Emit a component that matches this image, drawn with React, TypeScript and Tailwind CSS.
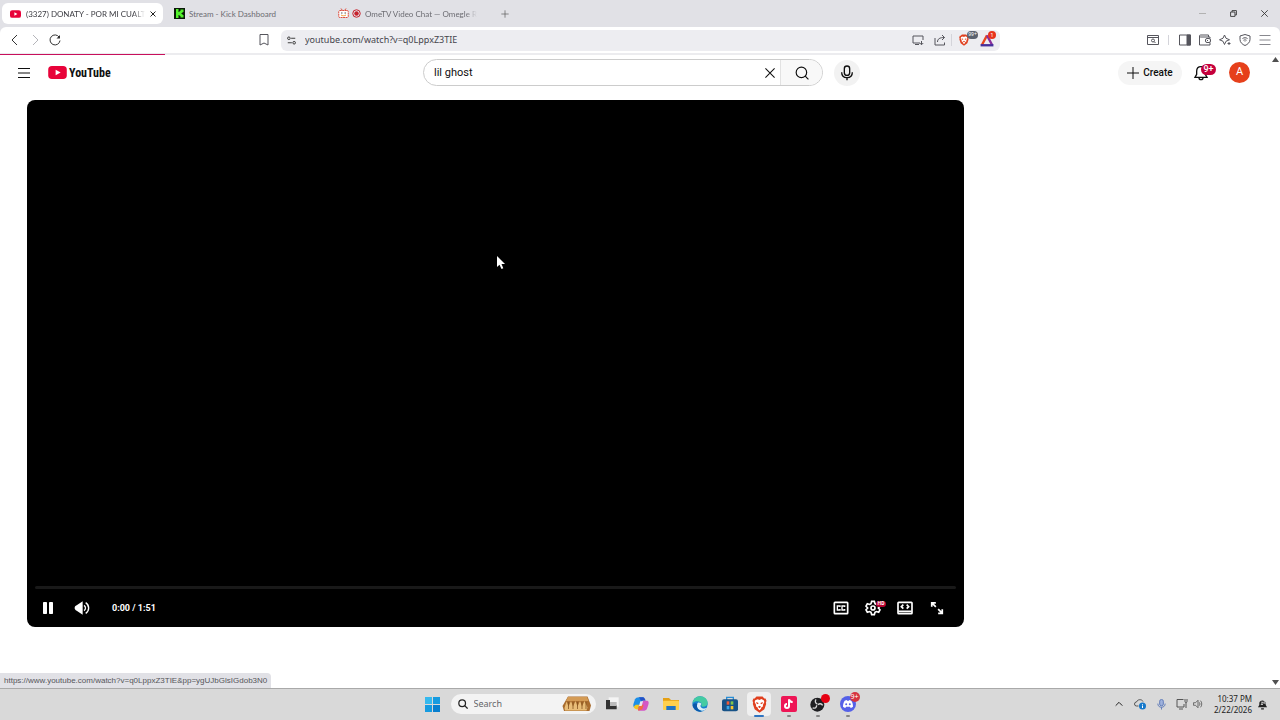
import { useState, ReactNode } from "react";

interface GlyphProps {
  className?: string;
  box?: string;
  weight?: number;
  children: ReactNode;
}

function Glyph({ className = "h-4 w-4", box = "0 0 24 24", weight = 2, children }: GlyphProps) {
  return (
    <svg
      className={`shrink-0 ${className}`}
      viewBox={box}
      fill="none"
      stroke="currentColor"
      strokeWidth={weight}
      aria-hidden="true"
    >
      {children}
    </svg>
  );
}

function YouTubeMark({ className }: { className: string }) {
  return (
    <svg className={`shrink-0 ${className}`} viewBox="0 0 20 14" aria-hidden="true">
      <rect width="20" height="14" rx="4" fill="#e8033a" />
      <path d="M8 4l5.4 3L8 10z" fill="#fff" />
    </svg>
  );
}

function BraveLion({ className }: { className: string }) {
  return (
    <svg className={`shrink-0 ${className}`} viewBox="0 0 24 28" aria-hidden="true">
      <path
        d="M7 1h10l3 3 2 0 1.500 4-1 3 .5 2-3 9-8 5.500-8-5.500-3-9 .5-2-1-3L2 4h2z"
        fill="#e0401f"
      />
      <path
        d="M5 7l4-1.500 3 1 3-1.500L19 7l1 3-2.500 5 .5 2-3 2-.5 2L12 23.500 9.500 21 9 19l-3-2 .5-2L4 10z"
        fill="#fff"
      />
      <path d="M6.500 10l4 1.500-1 2-2.500-1zM17.500 10l-4 1.500 1 2 2.500-1zM9.500 17.500L12 16l2.500 1.500L12 20z" fill="#e0401f" />
    </svg>
  );
}

function IconButton({
  label,
  className = "w-5",
  children,
}: {
  label: string;
  className?: string;
  children: ReactNode;
}) {
  return (
    <button type="button" aria-label={label} className={`flex h-5 shrink-0 items-center justify-center ${className}`}>
      {children}
    </button>
  );
}

function TabStrip() {
  return (
    <div className="flex h-[27px] items-center bg-[#e1e1e6] pl-0.5 font-[Lato,sans-serif] text-[8px] text-[#6c6c72]">
      <div className="mr-1 flex h-[21px] w-[161px] items-center rounded-md bg-white pr-1 pl-2 text-[#3c3c42]">
        <YouTubeMark className="h-2 w-[11px]" />
        <span className="ml-[5px] mask-r-from-90% whitespace-nowrap">(3327) DONATY - POR MI CUALT</span>
        <IconButton label="Close tab" className="ml-auto w-3 text-[#222]">
          <Glyph className="h-1.5 w-1.5" weight={4}>
            <path d="M2 2l20 20M22 2L2 22" />
          </Glyph>
        </IconButton>
      </div>
      <div className="mr-0.5 flex h-[21px] w-[161px] items-center gap-1 pl-[7px]">
        <svg className="h-[11px] w-[11px] shrink-0" viewBox="0 0 11 11" aria-hidden="true">
          <rect width="11" height="11" fill="#0a1a08" />
          <path d="M2 1h2.500v3h1V3h1V1.500H9.500V4h-1v1h-1v1h1v1h1v2.500H6.500V8h-1V7h-1v3H2z" fill="#53f22c" />
        </svg>
        <span>Stream - Kick Dashboard</span>
      </div>
      <div className="flex h-[21px] w-[161px] items-center pl-2">
        <svg className="h-[11px] w-[11px] shrink-0" viewBox="0 0 22 22" fill="none" stroke="#dd4c3c" strokeWidth="2" aria-hidden="true">
          <path d="M6 1l3 4M16 1l-3 4" />
          <rect x="1.500" y="5" width="19" height="14" rx="2" fill="#fff" strokeDasharray="4 1" />
          <path d="M6 10h3M13 10h3" stroke="#555" />
          <path d="M6 14c3 2 7 2 10 0" stroke="#ef9d38" />
        </svg>
        <svg className="ml-[3px] h-[9px] w-[9px] shrink-0" viewBox="0 0 18 18" aria-hidden="true">
          <circle cx="9" cy="9" r="7.500" fill="none" stroke="#c6222d" strokeWidth="2" />
          <circle cx="9" cy="9" r="4.500" fill="#c6222d" />
        </svg>
        <span className="ml-1 mask-r-from-90% whitespace-nowrap">OmeTV Video Chat — Omegle R</span>
      </div>
      <IconButton label="New tab" className="ml-1 w-5 text-[#555]">
        <Glyph className="h-2 w-2">
          <path d="M12 1v22M1 12h22" />
        </Glyph>
      </IconButton>
      <div className="ml-auto flex text-[#333]">
        <IconButton label="Minimize" className="w-[31px]">
          <Glyph className="h-[7px] w-[7px] text-[#aaa]" weight={3}>
            <path d="M0 12h24" />
          </Glyph>
        </IconButton>
        <IconButton label="Restore" className="w-[31px]">
          <Glyph className="h-[7px] w-[7px]" weight={3}>
            <path d="M2 7h15v15H2zM7 7V2h15v15h-5" />
          </Glyph>
        </IconButton>
        <IconButton label="Close window" className="w-[31px]">
          <Glyph className="h-[7px] w-[7px]" weight={3}>
            <path d="M1 1l22 22M23 1L1 23" />
          </Glyph>
        </IconButton>
      </div>
    </div>
  );
}

function Toolbar() {
  const [url, setUrl] = useState("youtube.com/watch?v=q0LppxZ3TIE");

  return (
    <div className="bg-[#e1e1e6]">
      <div className="flex h-[26px] items-center rounded-t-md bg-white px-[5px] text-[#55555c]">
        <IconButton label="Back">
          <Glyph className="h-3 w-3 text-[#333]">
            <path d="M16 2L6 12l10 10" />
          </Glyph>
        </IconButton>
        <IconButton label="Forward">
          <Glyph className="h-3 w-3 text-[#b5b5ba]">
            <path d="M8 2l10 10L8 22" />
          </Glyph>
        </IconButton>
        <IconButton label="Reload">
          <Glyph className="h-3 w-3 text-[#333]">
            <path d="M20.500 6.500A10 10 0 1 0 22 13" />
            <path d="M22 2v7h-7z" fill="currentColor" stroke="none" />
          </Glyph>
        </IconButton>
        <IconButton label="Bookmark" className="ml-[189px] w-5">
          <Glyph className="h-3 w-3">
            <path d="M4 1h16v21l-8-4-8 4z" />
          </Glyph>
        </IconButton>
        <div className="ml-[7px] flex h-[21px] flex-1 items-center rounded-md bg-[#ededf1]">
          <IconButton label="Site settings">
            <Glyph className="h-[9px] w-[9px] text-[#333]" weight={2.5}>
              <circle cx="5" cy="6" r="3.500" />
              <path d="M11 6h11M2 18h11" />
              <circle cx="19" cy="18" r="3.500" />
            </Glyph>
          </IconButton>
          <input
            aria-label="Address"
            value={url}
            onChange={(e) => setUrl(e.target.value)}
            className="ml-1 min-w-0 flex-1 text-[9px] text-[#45454c] focus:outline-none"
          />
          <IconButton label="Install app" className="w-[22px]">
            <Glyph className="h-3 w-3">
              <path d="M22 12V4H2v14h14M6 21h8M19 14v7M15.500 18l3.500 3.500 3.500-3.500" />
            </Glyph>
          </IconButton>
          <IconButton label="Share" className="w-[22px]">
            <Glyph className="h-3 w-3">
              <path d="M2 8v14h19v-5M7 16c0-6 4-9 14-9M16 2l5 5-5 5" />
            </Glyph>
          </IconButton>
          <span className="h-3 w-px bg-[#d4d4da]" />
          <button type="button" aria-label="Brave Shields" className="relative ml-1 flex h-5 w-6 items-center pl-[3px]">
            <BraveLion className="h-3 w-[10px]" />
            <span className="absolute top-px left-[11px] flex h-2 w-[11px] items-center justify-center rounded bg-[#5b626f] text-[5px] text-white">
              99+
            </span>
          </button>
          <button type="button" aria-label="Brave Rewards" className="relative flex h-5 w-5 items-center">
            <svg className="h-3.5 w-3.5" viewBox="0 0 24 24" strokeWidth="4" fill="none" aria-hidden="true">
              <path d="M12 4L3 21" stroke="#e8461f" />
              <path d="M12 4l9 17" stroke="#8a2e9a" />
              <path d="M1 21h22" stroke="#46309b" />
            </svg>
            <span className="absolute top-px left-2 flex h-2 w-2 items-center justify-center rounded-full bg-[#e8331c] text-[6px] text-white">
              1
            </span>
          </button>
        </div>
        <IconButton label="Search tabs" className="ml-[143px] w-5">
          <Glyph className="h-3 w-3">
            <path d="M1 3h22v18H1zM1 7h22" />
            <circle cx="12" cy="13" r="3" />
            <path d="M14 15l3 3" />
          </Glyph>
        </IconButton>
        <span className="mr-[6px] ml-[5px] h-2.5 w-px bg-[#d4d4da]" />
        <IconButton label="Sidebar">
          <Glyph className="h-3 w-3">
            <path d="M1 2h22v20H1z" />
            <path d="M16 2h7v20h-7z" fill="currentColor" />
          </Glyph>
        </IconButton>
        <IconButton label="Wallet">
          <Glyph className="h-3 w-3">
            <path d="M22 9V6H3a2 2 0 0 1 0-4h16v4M1 4v18h21v-5" />
            <rect x="13" y="9" width="10" height="8" rx="3" />
            <path d="M16 13h2" />
          </Glyph>
        </IconButton>
        <IconButton label="Leo AI">
          <Glyph className="h-3 w-3">
            <path d="M11 2l3 6.500 7 3-7 3-3 6.500-3-6.500-7-3 7-3z" />
            <path d="M20 16v6M17 19h6" />
          </Glyph>
        </IconButton>
        <IconButton label="VPN">
          <Glyph className="h-3 w-3">
            <path d="M12 1l10 3v7c0 6-5 10-10 12C7 21 2 17 2 11V4z" />
            <path d="M7 9c3-2 7-2 10 0M9 12.500c2-1 4-1 6 0M12 15v1" />
          </Glyph>
        </IconButton>
        <IconButton label="Menu">
          <Glyph className="h-3 w-3 text-[#88888e]">
            <path d="M1 3h22M1 12h22M1 21h22" />
          </Glyph>
        </IconButton>
      </div>
      <div className="h-0.5 bg-[#ececef] pt-px">
        <div className="h-px w-[165px] bg-[#c8105c]" />
      </div>
    </div>
  );
}

function Masthead() {
  const [query, setQuery] = useState("lil ghost");

  return (
    <header className="grid h-[35px] grid-cols-[1fr_auto_1fr] items-center pr-1 pl-[17px] font-[Roboto,sans-serif] text-[#0f0f0f]">
      <div className="flex items-center">
        <IconButton label="Guide" className="w-3.5">
          <Glyph className="h-3 w-3">
            <path d="M0 3h24M0 12h24M0 21h24" />
          </Glyph>
        </IconButton>
        <a href="#home" aria-label="YouTube Home" className="ml-[17px] flex items-center">
          <YouTubeMark className="h-[13px] w-[19px]" />
          <span className="ml-0.5 font-['Roboto_Condensed','Open_Sans_Condensed',Roboto,sans-serif] text-xs font-bold">
            YouTube
          </span>
        </a>
      </div>
      <form className="flex items-center" onSubmit={(e) => e.preventDefault()}>
        <div className="flex h-[27px] w-[400px] overflow-hidden rounded-full border border-[#ccc]">
          <input
            aria-label="Search"
            value={query}
            onChange={(e) => setQuery(e.target.value)}
            className="min-w-0 flex-1 pt-px pl-2.5 text-[11px] focus:outline-none"
          />
          <button
            type="button"
            aria-label="Clear search"
            onClick={() => setQuery("")}
            className="flex w-5 items-center justify-center"
          >
            <Glyph className="h-[10px] w-[10px]" weight={2.5}>
              <path d="M1 1l22 22M23 1L1 23" />
            </Glyph>
          </button>
          <button
            type="submit"
            aria-label="Submit search"
            className="flex w-[42px] items-center justify-center border-l border-[#e2e2e2] bg-[#f8f8f8]"
          >
            <Glyph className="h-3.5 w-3.5">
              <circle cx="11" cy="11" r="9" />
              <path d="M17.500 17.500l5.500 5.500" />
            </Glyph>
          </button>
        </div>
        <button
          type="button"
          aria-label="Search with your voice"
          className="ml-[11px] flex h-[26px] w-[26px] items-center justify-center rounded-full bg-[#f2f2f2]"
        >
          <Glyph className="h-4 w-4">
            <rect x="8" y="1.500" width="8" height="14" rx="4" />
            <path d="M4 11c0 5 3 8 8 8s8-3 8-8M12 19v4" />
          </Glyph>
        </button>
      </form>
      <div className="mr-4 flex items-center justify-end">
        <button
          type="button"
          className="flex h-6 w-16 items-center justify-center gap-1 rounded-full bg-[#f5f5f5] text-[10px] font-medium"
        >
          <Glyph className="h-3 w-3">
            <path d="M12 0v24M0 12h24" />
          </Glyph>
          Create
        </button>
        <button type="button" aria-label="Notifications" className="relative ml-[11px] flex h-6 w-[25px] items-center">
          <Glyph className="h-4 w-4">
            <path d="M12 2.500c-4 0-6.500 3-6.500 7V14L3 18.500h18L18.500 14V9.500c0-4-2.500-7-6.500-7z" />
            <path d="M9 19c0 4 6 4 6 0" />
          </Glyph>
          <span className="absolute top-[3px] left-2 flex h-[11px] w-[15px] items-center justify-center rounded-full bg-[#c5003c] text-[9px] leading-none font-medium text-white">
            9+
          </span>
        </button>
        <button
          type="button"
          aria-label="Account"
          className="ml-[11px] flex h-[21px] w-[21px] items-center justify-center rounded-full bg-[#e6401b] text-[11px] text-white"
        >
          A
        </button>
      </div>
    </header>
  );
}

function Player() {
  return (
    <section
      aria-label="Video player"
      className="relative flex aspect-[937/527] flex-col justify-end rounded-lg bg-black px-2 font-[Roboto,sans-serif] text-white"
    >
      <svg className="absolute top-[156px] left-[470px] h-[14px] w-[9px]" viewBox="0 0 9 14" aria-hidden="true">
        <path d="M0 0v11l2.500-2.200L4.500 13l1.800-.8L4.500 8H8z" fill="#fff" />
      </svg>
      <div className="h-[3px] rounded-full bg-[#191919]" />
      <div className="flex h-[38px] items-center pr-[3px]">
        <IconButton label="Pause" className="w-[26px]">
          <Glyph className="h-3 w-3">
            <rect x="2" y="0" width="8" height="24" rx="1.500" fill="currentColor" stroke="none" />
            <rect x="14" y="0" width="8" height="24" rx="1.500" fill="currentColor" stroke="none" />
          </Glyph>
        </IconButton>
        <IconButton label="Mute" className="ml-[13px] w-4">
          <Glyph className="h-4 w-4">
            <path d="M1 12c0-2 1-3 3-4l9-6v20l-9-6c-2-1-3-2-3-4z" fill="currentColor" stroke="none" />
            <path d="M15 8c3 2 3 6 0 8M17.500 4c6 4 6 12 0 16" />
          </Glyph>
        </IconButton>
        <span className="ml-[22px] pt-px text-[9px] font-bold">0:00 / 1:51</span>
        <div className="ml-auto flex">
          <IconButton label="Subtitles" className="w-8">
            <Glyph className="h-4 w-4" weight={2}>
              <rect x="2" y="3.500" width="20" height="17" rx="1" strokeWidth="2.500" />
              <path d="M10.500 10.500V9h-4v6h4v-1.500M17.500 10.500V9h-4v6h4v-1.500" />
            </Glyph>
          </IconButton>
          <button type="button" aria-label="Settings" className="relative flex h-5 w-8 items-center justify-center">
            <Glyph className="h-4 w-4" weight={2.5}>
              <path d="M10 2h4l1 3.500 2 1.200L20.500 5.700l2 3.600L20 12l2.500 2.700-2 3.600-3.500-1-2 1.200L14 22h-4l-1-3.500-2-1.200-3.500 1-2-3.600L4 12 1.500 9.300l2-3.600 3.500 1 2-1.200z" />
              <circle cx="12" cy="12" r="3" />
            </Glyph>
            <span className="absolute top-[3px] left-[19px] flex h-[6px] w-[10px] items-center justify-center rounded-sm bg-[#b8002f] text-[5px] font-bold">
              HD
            </span>
          </button>
          <IconButton label="Theater mode" className="w-8">
            <Glyph className="h-4 w-4" weight={2.5}>
              <rect x="1.500" y="3.500" width="21" height="17" rx="1" />
              <path d="M2 17h20M9.500 7l-3 3 3 3M14.500 7l3 3-3 3" />
            </Glyph>
          </IconButton>
          <IconButton label="Full screen" className="w-8">
            <Glyph className="h-[14px] w-[14px]" weight={3}>
              <path d="M3 10V3h7M3 3l7 7M21 14v7h-7M21 21l-7-7" />
            </Glyph>
          </IconButton>
        </div>
      </div>
    </section>
  );
}

const apps = [
  {
    name: "Task view",
    state: "",
    icon: (
      <>
        <rect x="7" y="2" width="15" height="14" fill="#f4f4f4" />
        <path d="M3 6h6v8h10v6H3z" fill="#333" />
        <path d="M9 9h10v6H9z" fill="#bbb" />
      </>
    ),
  },
  {
    name: "Copilot",
    state: "",
    icon: (
      <>
        <path d="M9 2h7l-5 14-3 2H4c-4 0-4-4-3-7l2-6c1-2 3-3 6-3z" fill="#1b8fe8" />
        <path d="M4 13h6l-3 7c-3 0-5-1-6-4z" fill="#f3c623" />
        <path d="M9 2h6c2 0 3 2 4 5h-7z" fill="#2452c6" />
        <path d="M15 7h5c4 0 4 3 3 6l-2 6c-1 2-3 3-6 3H8z" fill="#d457c5" />
        <path d="M7 20l3-7h6l-2 7-6 2z" fill="#f26a45" />
        <path d="M11 8h4l-2 7H9z" fill="#e9e5ee" />
      </>
    ),
  },
  {
    name: "File Explorer",
    state: "",
    icon: (
      <>
        <path d="M0 3h9l3 3h12v6H0z" fill="#e5a014" />
        <rect y="7" width="24" height="14" rx="1" fill="#ffd04d" />
        <path d="M5 15h14v6H5z" fill="#2074c4" />
      </>
    ),
  },
  {
    name: "Edge",
    state: "",
    icon: (
      <>
        <circle cx="12" cy="12" r="11.500" fill="#1680cf" />
        <path d="M1 10C2 4 7 .500 12 .500c7 0 11.500 5 11.500 9.500 0 4-3 6-7 6-3 0-3-2-2-3 0-5-8-7-13-3z" fill="#44cba2" />
        <path d="M9 10c-4 4-1 11 6 12 3 0 5-1 7-4-3 1-8 1-9-2-1-2 1-3 1-4s-3-3-5-2z" fill="#dceef8" />
        <path d="M8 12c-2 5 1 10 7 11-6 2-13-3-14-9 1-3 4-4 7-2z" fill="#0b58a9" />
      </>
    ),
  },
  {
    name: "Microsoft Store",
    state: "",
    icon: (
      <>
        <path d="M7 6V2h10v4" fill="none" stroke="#2a8ed6" strokeWidth="2" />
        <rect y="5" width="24" height="18" rx="3" fill="#175287" />
        <path d="M7 8h4v5H7z" fill="#f05a38" />
        <path d="M13 8h4v5h-4z" fill="#7fc54b" />
        <path d="M7 15h4v5H7z" fill="#38a7e8" />
        <path d="M13 15h4v5h-4z" fill="#fbc42b" />
      </>
    ),
  },
  { name: "Brave", state: "active", icon: null },
  {
    name: "TikTok",
    state: "open",
    icon: (
      <>
        <rect width="24" height="24" rx="3" fill="#ee1656" />
        <path d="M12 5v10a3 3 0 1 1-3-3M12 5c1 3 3 4 5.500 4" fill="none" stroke="#fff" strokeWidth="3" />
      </>
    ),
  },
  {
    name: "OBS Studio",
    state: "open",
    icon: (
      <>
        <circle cx="11" cy="13" r="10.500" fill="#1f1f22" />
        <path d="M11 12c-3-1-4-4-2-7M12 13c2-2 5-2 7 1M10 14c0 3-2 5-6 4" fill="none" stroke="#d8d8d8" strokeWidth="2" />
      </>
    ),
  },
  {
    name: "Discord",
    state: "open",
    icon: (
      <>
        <circle cx="12" cy="12" r="12" fill="#5561e8" />
        <path d="M7 7l3-1 .7 1.300h2.600L14 6l3 1c2 3 2.500 6 2.500 9-1 1-2 1.500-3.500 2l-1-2H9l-1 2c-1.500-.5-2.500-1-3.500-2 0-3 .5-6 2.500-9z" fill="#fff" />
        <circle cx="9.300" cy="12.500" r="1.500" fill="#5561e8" />
        <circle cx="14.700" cy="12.500" r="1.500" fill="#5561e8" />
      </>
    ),
  },
];

function Taskbar() {
  return (
    <footer className="grid h-8 grid-cols-[1fr_auto_1fr] items-center border-t border-[#a9a9a9] bg-[#d9d9d9] pb-px text-[#222]">
      <div />
      <div className="flex items-center">
        <button type="button" aria-label="Start" className="flex h-6 w-6 items-center justify-center">
          <svg className="h-[15px] w-[15px]" viewBox="0 0 15 15" fill="#169be0" aria-hidden="true">
            <path d="M0 0h7v7H0z" fill="#35b9ee" />
            <path d="M8 0h7v7H8zM0 8h7v7H0z" />
            <path d="M8 8h7v7H8z" fill="#087fcf" />
          </svg>
        </button>
        <label className="mr-1 ml-1.5 flex h-5 w-[145px] items-center rounded-full bg-[#f3f3f3] pr-1 pl-[7px]">
          <Glyph className="h-[10px] w-[10px]" weight={3}>
            <circle cx="10" cy="10" r="8" />
            <path d="M16 16l7 7" />
          </Glyph>
          <input
            aria-label="Search Windows"
            placeholder="Search"
            className="ml-1.5 min-w-0 flex-1 text-[9px] placeholder:text-[#66666a] focus:outline-none"
          />
          <svg className="h-4 w-[30px] shrink-0" viewBox="0 0 60 32" aria-hidden="true">
            <path d="M12 1h39l7 18-3 11H4L1 20z" fill="#a96c2e" />
            <path d="M12 2h38l3 8H8z" fill="#d49b55" />
            <path d="M5 24l4-13 4 10 5-11 4 11 5-11 4 11 5-11 4 11 5-11 6 13-2 6H6z" fill="#e9bd78" />
            <path d="M13 12v14M22 12v14M31 12v14M40 12v14M48 12v14" stroke="#80501f" strokeWidth="1.500" />
          </svg>
        </label>
        <div className="flex w-[260px] justify-between">
          {apps.map((app) => (
            <button
              key={app.name}
              type="button"
              aria-label={app.name}
              className={`relative flex h-6 w-6 items-center justify-center rounded-sm ${
                app.state === "active" ? "bg-[#f0f0f0]" : ""
              }`}
            >
              {app.icon ? (
                <svg className="h-4 w-4" viewBox="0 0 24 24" aria-hidden="true">
                  {app.icon}
                </svg>
              ) : (
                <BraveLion className="h-[17px] w-[15px]" />
              )}
              {app.name === "OBS Studio" && (
                <span className="absolute top-0.5 right-0 h-[9px] w-[9px] rounded-full bg-[#e60012]" />
              )}
              {app.name === "Discord" && (
                <span className="absolute top-0 right-0 flex h-[10px] w-[10px] items-center justify-center rounded-full bg-[#d63440] text-[7px] text-white">
                  9+
                </span>
              )}
              {app.state === "active" && (
                <span className="absolute -bottom-px h-0.5 w-2.5 rounded-full bg-[#2f74c0]" />
              )}
              {app.state === "open" && (
                <span className="absolute -bottom-px h-0.5 w-1 rounded-full bg-[#858585]" />
              )}
            </button>
          ))}
        </div>
      </div>
      <div className="flex items-center justify-end pr-3">
        <IconButton label="Show hidden icons" className="w-5">
          <Glyph className="h-2 w-2" weight={3}>
            <path d="M2 17L12 7l10 10" />
          </Glyph>
        </IconButton>
        <IconButton label="OneDrive" className="w-[22px]">
          <Glyph className="h-3 w-3">
            <path d="M9 16H5a4 4 0 0 1 0-8c2-6 11-6 13-1" stroke="#555" />
            <circle cx="17" cy="16" r="7" fill="#1679cb" stroke="none" />
            <path d="M17 12v1.500M17 15v5" stroke="#fff" />
          </Glyph>
        </IconButton>
        <IconButton label="Microphone in use" className="w-5">
          <Glyph className="h-[11px] w-[11px] text-[#5c78b8]">
            <rect x="8" y="1" width="8" height="14" rx="4" fill="#9fb2dc" />
            <path d="M4 10c0 5 3 8 8 8s8-3 8-8M12 18v5" />
          </Glyph>
        </IconButton>
        <IconButton label="Network" className="ml-[3px] w-4">
          <Glyph className="h-3 w-3 text-[#555]">
            <path d="M15 3H2v15h14v-6M6 22h8M18 2v5a2 2 0 0 0 4 0V2M20 9v11" />
          </Glyph>
        </IconButton>
        <IconButton label="Volume" className="w-4">
          <Glyph className="h-[10px] w-[10px] text-[#555]">
            <path d="M1 9h5l6-6v18l-6-6H1zM15 8c2 2 2 6 0 8M18 4c4 4 4 12 0 16" />
          </Glyph>
        </IconButton>
        <div className="ml-0.5 w-11 text-right text-[8px] leading-[11px] whitespace-nowrap">
          <div>10:37 PM</div>
          <div>2/22/2026</div>
        </div>
        <IconButton label="Notifications" className="ml-[5px] w-[11px]">
          <Glyph className="h-[11px] w-[11px]">
            <path d="M2 18l3-5V9c0-8 14-8 14 0v4l3 5zM9 20h6v3H9z" fill="currentColor" stroke="none" />
            <path d="M9 7h4l-4 5h4M14 4h5l-5 5h5" stroke="#d9d9d9" />
          </Glyph>
        </IconButton>
      </div>
    </footer>
  );
}

export default function App() {
  return (
    <div className="flex min-h-screen flex-col bg-white font-['Noto_Sans',sans-serif]">
      <TabStrip />
      <Toolbar />
      <div className="relative flex flex-1">
        <div className="flex-1">
          <Masthead />
          <main className="mt-2.5 grid grid-cols-[1fr_306px] pl-[27px]">
            <Player />
          </main>
        </div>
        <div className="flex w-2.5 flex-col items-center justify-between pt-0.5 pb-[3px]" aria-hidden="true">
          <svg className="h-[5px] w-[7px]" viewBox="0 0 7 5">
            <path d="M3.500 0L7 5H0z" fill="#505050" />
          </svg>
          <svg className="h-[5px] w-[7px]" viewBox="0 0 7 5">
            <path d="M0 0h7L3.500 5z" fill="#505050" />
          </svg>
        </div>
        <div className="absolute bottom-0 left-0 rounded-tr-sm bg-[#e1e1e6] px-1 font-['Liberation_Sans',sans-serif] text-[8px] leading-[15px] whitespace-nowrap text-[#55555a]">
          https://www.youtube.com/watch?v=q0LppxZ3TIE&amp;pp=ygUJbGlsIGdob3N0
        </div>
      </div>
      <Taskbar />
    </div>
  );
}
